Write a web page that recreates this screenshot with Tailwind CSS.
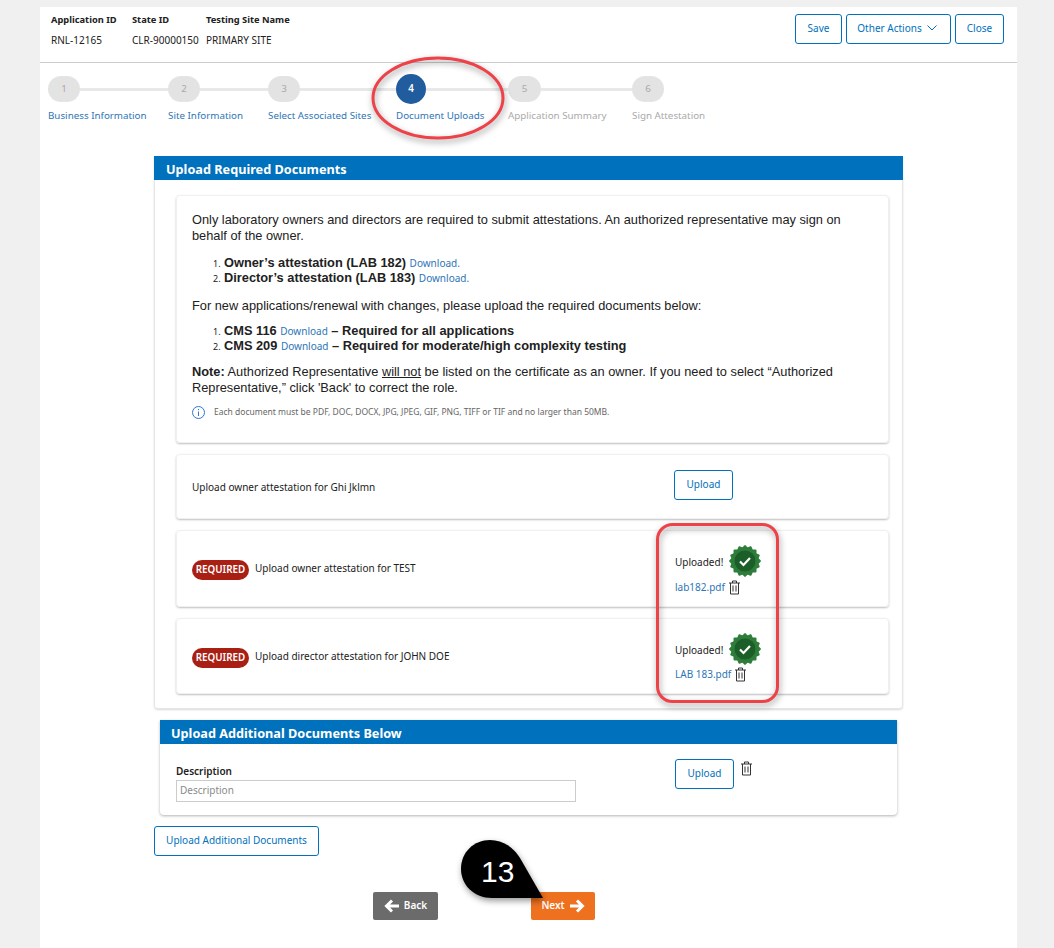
<!DOCTYPE html>
<html lang="en">
<head>
    <meta charset="UTF-8">
    <meta name="viewport" content="width=device-width, initial-scale=1.0">
    <title>Document Uploads</title>
    <script src="https://cdn.jsdelivr.net/npm/@tailwindcss/browser@4"></script>
</head>
<body class="bg-[#f0f0f0] font-['Noto_Sans',sans-serif] text-[10px] text-[#212121]">
<div class="relative w-[1054px] h-[948px] overflow-hidden pt-[7px] pl-[40px]">
    <div class="w-[977px] h-[941px] bg-white">

        <!-- header -->
        <div class="flex justify-between h-[56px] border-b border-[#cccccc] pl-[11px] pr-[13px]">
            <div class="flex pt-[6px]">
                <div class="w-[81px]">
                    <div class="font-bold text-[9.3px] leading-[14px]">Application ID</div>
                    <div class="leading-[14px] mt-[6px]">RNL-12165</div>
                </div>
                <div class="w-[74px]">
                    <div class="font-bold text-[9.3px] leading-[14px]">State ID</div>
                    <div class="leading-[14px] mt-[6px]">CLR-90000150</div>
                </div>
                <div>
                    <div class="font-bold text-[9.3px] leading-[14px]">Testing Site Name</div>
                    <div class="leading-[14px] mt-[6px]">PRIMARY SITE</div>
                </div>
            </div>
            <div class="flex gap-[4px] pt-[7px] text-[#0071bc]">
                <button class="w-[47px] h-[30px] border border-[#0071bc] rounded-[3px] pb-[2px]">Save</button>
                <button class="w-[105px] h-[30px] border border-[#0071bc] rounded-[3px] flex items-center justify-center gap-[5px] pr-[3px] pb-[2px]">Other Actions
                    <svg width="10" height="6" viewBox="0 0 10 6" fill="none" stroke="#0071bc" stroke-width="1"><path d="M0.5 0.5 L5 5 L9.5 0.5"/></svg>
                </button>
                <button class="w-[49px] h-[30px] border border-[#0071bc] rounded-[3px] pb-[2px]">Close</button>
            </div>
        </div>

        <!-- stepper -->
        <div class="flex pl-[8px] pt-[11px] h-[93px] text-[9.8px]">
            <div class="w-[120px]">
                <div class="flex items-center h-[30px]"><div class="w-[32px] h-[26px] rounded-full bg-[#e3e3e3] text-[#aaaaaa] flex items-center justify-center shrink-0">1</div><div class="flex-1 h-[3px] bg-[#e8e8e8]"></div></div>
                <div class="text-[#2e75b6] mt-[5px] whitespace-nowrap">Business Information</div>
            </div>
            <div class="w-[100px]">
                <div class="flex items-center h-[30px]"><div class="w-[32px] h-[26px] rounded-full bg-[#e3e3e3] text-[#aaaaaa] flex items-center justify-center shrink-0">2</div><div class="flex-1 h-[3px] bg-[#e8e8e8]"></div></div>
                <div class="text-[#2e75b6] mt-[5px] whitespace-nowrap">Site Information</div>
            </div>
            <div class="w-[128px]">
                <div class="flex items-center h-[30px]"><div class="w-[32px] h-[26px] rounded-full bg-[#e3e3e3] text-[#aaaaaa] flex items-center justify-center shrink-0">3</div><div class="flex-1 h-[3px] bg-[#e8e8e8]"></div></div>
                <div class="text-[#2e75b6] mt-[5px] whitespace-nowrap">Select Associated Sites</div>
            </div>
            <div class="w-[112px]">
                <div class="flex items-center h-[30px]"><div class="w-[30px] h-[30px] rounded-full bg-[#205c9e] text-white font-semibold flex items-center justify-center shrink-0">4</div><div class="flex-1 h-[3px] bg-[#e8e8e8]"></div></div>
                <div class="text-[#2e75b6] mt-[5px] whitespace-nowrap">Document Uploads</div>
            </div>
            <div class="w-[124px]">
                <div class="flex items-center h-[30px]"><div class="w-[33px] h-[26px] rounded-full bg-[#e3e3e3] text-[#aaaaaa] flex items-center justify-center shrink-0">5</div><div class="flex-1 h-[3px] bg-[#e8e8e8]"></div></div>
                <div class="text-[#aaaaaa] mt-[5px] whitespace-nowrap">Application Summary</div>
            </div>
            <div class="w-[100px]">
                <div class="flex items-center h-[30px]"><div class="w-[32px] h-[26px] rounded-full bg-[#e3e3e3] text-[#aaaaaa] flex items-center justify-center shrink-0">6</div></div>
                <div class="text-[#aaaaaa] mt-[5px] whitespace-nowrap">Sign Attestation</div>
            </div>
        </div>

        <!-- required documents -->
        <div class="ml-[114px] w-[749px] rounded-b-[4px] border-x border-b border-[#e6e6e6] shadow-[0_1px_2px_rgba(0,0,0,0.15)] pb-[14px]">
            <div class="-mx-px h-[24px] bg-[#0071bc] text-white font-bold text-[12.7px] leading-[26px] pl-[12px]">Upload Required Documents</div>
            <div class="flex flex-col gap-[11px] ml-[21px] mr-[13px] mt-[15px]">

                <div class="h-[248px] rounded-[4px] border border-[#f0f0f0] shadow-[0_1px_2px_rgba(0,0,0,0.25)] pl-[15px] pt-[16px] pr-[16px] font-['Liberation_Sans',sans-serif] text-[12.8px] leading-[16px] text-[#212121]">
                    <p>Only laboratory owners and directors are required to submit attestations. An authorized representative may sign on behalf of the owner.</p>
                    <ol class="mt-[11px] ml-[21px]">
                        <li class="flex items-baseline h-[15px] leading-[15px]"><span class="w-[11px] font-['Noto_Sans',sans-serif] text-[9px]">1.</span><span><b>Owner’s attestation (LAB 182)</b> <a class="font-['Noto_Sans',sans-serif] text-[10px] text-[#2e75b6]">Download.</a></span></li>
                        <li class="flex items-baseline h-[15px] leading-[15px]"><span class="w-[11px] font-['Noto_Sans',sans-serif] text-[9px]">2.</span><span><b>Director’s attestation (LAB 183)</b> <a class="font-['Noto_Sans',sans-serif] text-[10px] text-[#2e75b6]">Download.</a></span></li>
                    </ol>
                    <p class="mt-[13px]">For new applications/renewal with changes, please upload the required documents below:</p>
                    <ol class="mt-[9px] ml-[21px]">
                        <li class="flex items-baseline h-[15px] leading-[15px]"><span class="w-[11px] font-['Noto_Sans',sans-serif] text-[9px]">1.</span><span><b>CMS 116</b> <a class="font-['Noto_Sans',sans-serif] text-[10px] text-[#2e75b6]">Download</a> <b>– Required for all applications</b></span></li>
                        <li class="flex items-baseline h-[15px] leading-[15px]"><span class="w-[11px] font-['Noto_Sans',sans-serif] text-[9px]">2.</span><span><b>CMS 209</b> <a class="font-['Noto_Sans',sans-serif] text-[10px] text-[#2e75b6]">Download</a> <b>– Required for moderate/high complexity testing</b></span></li>
                    </ol>
                    <p class="mt-[11px]"><b>Note:</b> Authorized Representative <u>will not</u> be listed on the certificate as an owner. If you need to select “Authorized Representative,” click 'Back' to correct the role.</p>
                    <div class="flex items-center gap-[9px] mt-[8px] font-['Noto_Sans',sans-serif] text-[8.5px] text-[#666666]">
                        <svg width="13" height="13" viewBox="0 0 13 13" fill="none" stroke="#2e75d6" class="shrink-0"><circle cx="6.5" cy="6.5" r="6"/><path d="M6.5 5.5 V10 M6.5 3 V4.2"/></svg>
                        <span>Each document must be PDF, DOC, DOCX, JPG, JPEG, GIF, PNG, TIFF or TIF and no larger than 50MB.</span>
                    </div>
                </div>

                <div class="h-[65px] rounded-[4px] border border-[#f0f0f0] shadow-[0_1px_2px_rgba(0,0,0,0.25)] pl-[15px] flex">
                    <div class="w-[482px] pt-[25px]">Upload owner attestation for Ghi Jklmn</div>
                    <div class="pt-[15px]"><button class="w-[59px] h-[30px] border border-[#0071bc] rounded-[3px] text-[#0071bc] pb-[1px]">Upload</button></div>
                </div>

                <div class="h-[77px] rounded-[4px] border border-[#f0f0f0] shadow-[0_1px_2px_rgba(0,0,0,0.25)] pl-[15px] flex">
                    <div class="w-[483px] pt-[29px] flex items-start gap-[6px]">
                        <span class="w-[57px] h-[20px] rounded-full bg-[#a91f14] text-white font-semibold text-[9.8px] leading-[20px] text-center">REQUIRED</span>
                        <span class="leading-[16px]">Upload owner attestation for TEST</span>
                    </div>
                    <div class="pt-[14px]">
                        <div class="flex items-center gap-[6px]">
                            <span class="mt-[2px]">Uploaded!</span>
                            <svg width="32" height="32" viewBox="0 0 32 32">
                                <g fill="#2e7d3a">
                                    <rect x="4.5" y="4.5" width="23" height="23" rx="1"/>
                                    <rect x="4.5" y="4.5" width="23" height="23" rx="1" transform="rotate(22.5 16 16)"/>
                                    <rect x="4.5" y="4.5" width="23" height="23" rx="1" transform="rotate(45 16 16)"/>
                                    <rect x="4.5" y="4.5" width="23" height="23" rx="1" transform="rotate(67.5 16 16)"/>
                                </g>
                                <circle cx="16" cy="16" r="10.5" fill="#1b5e28"/>
                                <path d="M11 16.5 L14.5 20 L21 13" fill="none" stroke="#ffffff" stroke-width="2.2"/>
                            </svg>
                        </div>
                        <div class="flex items-center gap-[3px] mt-[3px]">
                            <a class="text-[#2e75b6]">lab182.pdf</a>
                            <svg width="13" height="15" viewBox="0 0 13 15" fill="none" stroke="#333333"><path d="M1 3 H12 M4.5 3 V1 H8.5 V3 M2.5 3 V14 H10.5 V3 M5 5.5 V11.5 M8 5.5 V11.5"/></svg>
                        </div>
                    </div>
                </div>

                <div class="h-[76px] rounded-[4px] border border-[#f0f0f0] shadow-[0_1px_2px_rgba(0,0,0,0.25)] pl-[15px] flex">
                    <div class="w-[483px] pt-[29px] flex items-start gap-[6px]">
                        <span class="w-[57px] h-[20px] rounded-full bg-[#a91f14] text-white font-semibold text-[9.8px] leading-[20px] text-center">REQUIRED</span>
                        <span class="leading-[16px]">Upload director attestation for JOHN DOE</span>
                    </div>
                    <div class="pt-[14px]">
                        <div class="flex items-center gap-[6px]">
                            <span class="mt-[2px]">Uploaded!</span>
                            <svg width="32" height="32" viewBox="0 0 32 32">
                                <g fill="#2e7d3a">
                                    <rect x="4.5" y="4.5" width="23" height="23" rx="1"/>
                                    <rect x="4.5" y="4.5" width="23" height="23" rx="1" transform="rotate(22.5 16 16)"/>
                                    <rect x="4.5" y="4.5" width="23" height="23" rx="1" transform="rotate(45 16 16)"/>
                                    <rect x="4.5" y="4.5" width="23" height="23" rx="1" transform="rotate(67.5 16 16)"/>
                                </g>
                                <circle cx="16" cy="16" r="10.5" fill="#1b5e28"/>
                                <path d="M11 16.5 L14.5 20 L21 13" fill="none" stroke="#ffffff" stroke-width="2.2"/>
                            </svg>
                        </div>
                        <div class="flex items-center gap-[3px] mt-[2px]">
                            <a class="text-[#2e75b6]">LAB 183.pdf</a>
                            <svg width="13" height="15" viewBox="0 0 13 15" fill="none" stroke="#333333"><path d="M1 3 H12 M4.5 3 V1 H8.5 V3 M2.5 3 V14 H10.5 V3 M5 5.5 V11.5 M8 5.5 V11.5"/></svg>
                        </div>
                    </div>
                </div>
            </div>
        </div>

        <!-- additional documents -->
        <div class="ml-[120px] mt-[11px] w-[737px] h-[95px] rounded-b-[4px] shadow-[0_1px_3px_rgba(0,0,0,0.3)]">
            <div class="h-[24px] bg-[#0071bc] text-white font-bold text-[12.7px] leading-[26px] pl-[11px]">Upload Additional Documents Below</div>
            <div class="flex pl-[16px] pt-[15px]">
                <div class="w-[499px] pt-[5px]">
                    <div class="font-semibold leading-[14px]">Description</div>
                    <div class="mt-[2px] w-[400px] h-[22px] border border-[#cccccc] pl-[3px] leading-[18px] text-[#8a8a8a]">Description</div>
                </div>
                <button class="w-[59px] h-[30px] border border-[#0071bc] rounded-[3px] text-[#0071bc] pb-[1px]">Upload</button>
                <svg class="ml-[6px] mt-[2px]" width="13" height="15" viewBox="0 0 13 15" fill="none" stroke="#333333"><path d="M1 3 H12 M4.5 3 V1 H8.5 V3 M2.5 3 V14 H10.5 V3 M5 5.5 V11.5 M8 5.5 V11.5"/></svg>
            </div>
        </div>

        <div class="ml-[114px] mt-[11px]">
            <button class="w-[165px] h-[30px] border border-[#0071bc] rounded-[3px] text-[#0071bc] pb-[2px]">Upload Additional Documents</button>
        </div>

        <!-- nav -->
        <div class="flex gap-[93px] ml-[333px] mt-[36px] text-white font-semibold">
            <button class="w-[65px] h-[28px] bg-[#6b6b6b] rounded-[2px] flex items-center justify-center gap-[5px] pb-[1px]">
                <svg width="15" height="14" viewBox="0 0 15 14" fill="none" stroke="#ffffff" stroke-width="3"><path d="M15 7 H3 M8 1.5 L2.5 7 L8 12.5"/></svg>
                Back
            </button>
            <button class="w-[64px] h-[28px] bg-[#ee711f] rounded-[2px] flex items-center justify-center gap-[5px] pb-[1px]">
                Next
                <svg width="15" height="14" viewBox="0 0 15 14" fill="none" stroke="#ffffff" stroke-width="3"><path d="M0 7 H12 M7 1.5 L12.5 7 L7 12.5"/></svg>
            </button>
        </div>
    </div>

    <!-- annotations on top of the screenshot -->
    <svg class="absolute left-0 top-0 pointer-events-none drop-shadow-[1px_3px_3px_rgba(0,0,0,0.4)]" width="1054" height="948" fill="none">
        <ellipse cx="438" cy="98" rx="65" ry="40" stroke="#ee4249" stroke-width="3"/>
        <rect x="657.5" y="524.5" width="120" height="177" rx="15" stroke="#ee4249" stroke-width="3"/>
        <path d="M543 898 L492 898 C474 898 461 885 461 869 C461 852 474 840 490 840 C505 840 515 850 520 858 Z" fill="#000000"/>
    </svg>
    <div class="absolute left-[481px] top-[854px] font-['Liberation_Sans',sans-serif] text-[30px] leading-[36px] text-white">13</div>
</div>
</body>
</html>
